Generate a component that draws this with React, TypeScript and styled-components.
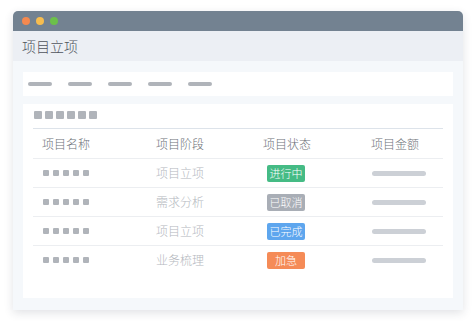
import React from "react";
import styled, { createGlobalStyle } from "styled-components";

const Global = createGlobalStyle`
  html, body { margin: 0; padding: 0; background: #ffffff; }
  body { font-family: "Noto Sans CJK SC", "Noto Sans", sans-serif; }
`;

const Page = styled.div`
  padding: 11px 13px;
  width: 450px;
`;

const Window = styled.div`
  width: 450px;
  height: 299px;
  border-radius: 5px 5px 0 0;
  box-shadow: 0 3px 10px rgba(40, 50, 70, 0.14);
  display: flex;
  flex-direction: column;
  overflow: hidden;
  background: #f5f8fb;
`;

const TitleBar = styled.div`
  height: 20px;
  background: #738291;
  display: flex;
  align-items: center;
  gap: 6px;
  padding-left: 9px;
  flex-shrink: 0;
`;

const Dot = styled.span<{ $c: string }>`
  width: 8px;
  height: 8px;
  border-radius: 50%;
  background: ${(p) => p.$c};
`;

const Header = styled.div`
  height: 30px;
  background: #eceff4;
  display: flex;
  align-items: center;
  padding-left: 9px;
  font-size: 14px;
  font-weight: 300;
  color: #4f535c;
  flex-shrink: 0;
`;

const Body = styled.div`
  flex: 1;
  padding: 11px 10px 12px;
  display: flex;
  flex-direction: column;
  gap: 8px;
`;

const NavCard = styled.div`
  height: 24px;
  background: #ffffff;
  display: flex;
  align-items: center;
  gap: 16px;
  padding-left: 5px;
`;

const NavBar = styled.span`
  width: 24px;
  height: 4px;
  border-radius: 2px;
  background: #b0b4ba;
`;

const TableCard = styled.div`
  flex: 1;
  background: #ffffff;
  padding: 7px 10px 0;
  display: flex;
  flex-direction: column;
`;

const TitleSquares = styled.div`
  display: flex;
  gap: 3px;
  padding-left: 1px;
  padding-bottom: 9px;
  border-bottom: 1px solid #dde3ea;
`;

const Square = styled.span<{ $s: number }>`
  width: ${(p) => p.$s}px;
  height: ${(p) => p.$s}px;
  border-radius: 1px;
  background: #b0b4ba;
`;

const Row = styled.div<{ $last?: boolean; $head?: boolean }>`
  height: 28px;
  padding-top: ${(p) => (p.$head ? 1 : 0)}px;
  flex-shrink: 0;
  display: grid;
  grid-template-columns: 114px 107px 108px 1fr;
  align-items: center;
  border-bottom: ${(p) => (p.$last ? "none" : "1px solid #eceef1")};
`;

const Cell = styled.div<{ $pad?: number; $muted?: boolean; $head?: boolean }>`
  padding-left: ${(p) => p.$pad ?? 9}px;
  font-size: 12px;
  font-weight: 300;
  color: ${(p) => (p.$head ? "#6e7278" : p.$muted ? "#b4b8be" : "#666")};
  display: flex;
  align-items: center;
  line-height: 1;
`;

const NameSquares = styled.div`
  display: flex;
  gap: 4px;
  padding-left: 1px;
`;

const Badge = styled.span<{ $c: string }>`
  width: 38px;
  height: 17px;
  border-radius: 2px;
  background: ${(p) => p.$c};
  color: #ffffff;
  font-size: 11px;
  display: flex;
  align-items: center;
  justify-content: center;
`;

const Amount = styled.span`
  width: 54px;
  height: 5px;
  border-radius: 3px;
  background: #ccd0d6;
`;

const rows = [
  { stage: "项目立项", status: "进行中", color: "#45bb85" },
  { stage: "需求分析", status: "已取消", color: "#a9aeb6" },
  { stage: "项目立项", status: "已完成", color: "#5ea6ee" },
  { stage: "业务梳理", status: "加急", color: "#f58b57" },
];

export default function App() {
  return (
    <>
      <Global />
      <Page>
        <Window>
          <TitleBar>
            <Dot $c="#f5894f" />
            <Dot $c="#f7bd4f" />
            <Dot $c="#6cc04a" />
          </TitleBar>
          <Header>项目立项</Header>
          <Body>
            <NavCard>
              {[0, 1, 2, 3, 4].map((i) => (
                <NavBar key={i} />
              ))}
            </NavCard>
            <TableCard>
              <TitleSquares>
                {[0, 1, 2, 3, 4, 5].map((i) => (
                  <Square key={i} $s={8} />
                ))}
              </TitleSquares>
              <Row $head>
                <Cell $head>项目名称</Cell>
                <Cell $head>项目阶段</Cell>
                <Cell $head>项目状态</Cell>
                <Cell $head>项目金额</Cell>
              </Row>
              {rows.map((r, i) => (
                <Row key={i} $last={i === rows.length - 1}>
                  <Cell>
                    <NameSquares>
                      {[0, 1, 2, 3, 4].map((k) => (
                        <Square key={k} $s={6} />
                      ))}
                    </NameSquares>
                  </Cell>
                  <Cell $muted>{r.stage}</Cell>
                  <Cell $pad={13}>
                    <Badge $c={r.color}>{r.status}</Badge>
                  </Cell>
                  <Cell $pad={10}>
                    <Amount />
                  </Cell>
                </Row>
              ))}
            </TableCard>
          </Body>
        </Window>
      </Page>
    </>
  );
}
